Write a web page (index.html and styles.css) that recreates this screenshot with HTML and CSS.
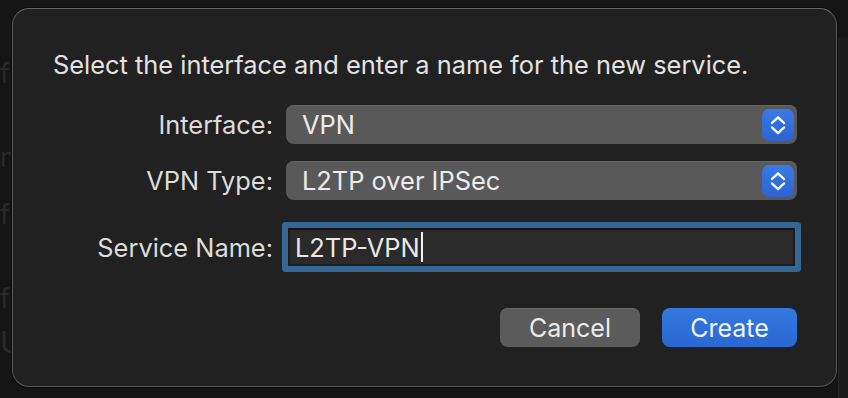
FILE: index.html
```html
<!DOCTYPE html>
<html>
<head>
<meta charset="utf-8">
<link rel="stylesheet" href="styles.css">
</head>
<body>
<div class="backdrop">
  <div class="bg-col">
    <div class="bg-line l1">fi</div>
    <div class="bg-line l2">n</div>
    <div class="bg-line l4">fi</div>
    <div class="bg-line l6">fi</div>
    <div class="bg-line l7">US</div>
  </div>
  <div class="bg-right"></div>
</div>
<div class="sheet">
  <p class="heading">Select the interface and enter a name for the new service.</p>
  <div class="form">
    <label class="label">Interface:</label>
    <div class="popup">
      <span class="popup-text">VPN</span>
      <span class="stepper">
        <svg width="32" height="32" viewBox="0 0 32 32"><path d="M10 14 L16 8.3 L22 14 M10 18.5 L16 24.2 L22 18.5" fill="none" stroke="#fff" stroke-width="2.4" stroke-linecap="round" stroke-linejoin="round"/></svg>
      </span>
    </div>
    <label class="label">VPN Type:</label>
    <div class="popup">
      <span class="popup-text">L2TP over IPSec</span>
      <span class="stepper">
        <svg width="32" height="32" viewBox="0 0 32 32"><path d="M10 14 L16 8.3 L22 14 M10 18.5 L16 24.2 L22 18.5" fill="none" stroke="#fff" stroke-width="2.4" stroke-linecap="round" stroke-linejoin="round"/></svg>
      </span>
    </div>
    <label class="label label-field">Service Name:</label>
    <div class="field"><span class="field-text">L2TP-VPN</span><span class="caret"></span></div>
  </div>
  <div class="buttons">
    <button class="btn btn-cancel">Cancel</button>
    <button class="btn btn-create">Create</button>
  </div>
</div>
</body>
</html>
```
FILE: styles.css
```css
* { box-sizing: border-box; }
html, body {
  margin: 0;
  padding: 0;
  width: 848px;
  height: 398px;
  overflow: hidden;
  background: #151515;
  font-family: Inter, "Liberation Sans", sans-serif;
}
.backdrop {
  display: flex;
  justify-content: space-between;
  height: 398px;
}
.bg-col {
  display: flex;
  flex-direction: column;
  color: #2a2a2a;
  font-size: 26px;
  padding-top: 60px;
}
.bg-line { line-height: 28px; height: 28px; }
.l2 { margin-top: 56px; }
.l4 { margin-top: 29px; }
.l6 { margin-top: 56px; }
.l7 { margin-top: 12px; font-size: 30px; line-height: 34px; }
.bg-right {
  width: 10px;
  margin-top: 38px;
  background: #1c1c1c;
  border-left: 1px solid #262626;
}
.sheet {
  position: absolute;
  left: 12px;
  top: 8px;
  width: 825px;
  height: 379px;
  background: #212121;
  border: 1px solid #585858;
  border-top-color: #666666;
  border-radius: 17px;
  box-shadow: 0 0 0 1px #0c0c0c;
  padding: 37px 39px 0 40px;
  color: #dfdfdf;
}
.heading {
  margin: 0;
  font-size: 25.4px;
  line-height: 38px;
  color: #e2e2e2;
}
.form {
  display: grid;
  grid-template-columns: 220px 1fr;
  column-gap: 13px;
  row-gap: 17px;
  margin-top: 21px;
  align-items: center;
}
.label {
  text-align: right;
  font-size: 25.4px;
  color: #dcdcdc;
}
.popup {
  height: 39px;
  background: #595959;
  border-radius: 8px;
  box-shadow: inset 0 1px 0 #666666;
  display: flex;
  align-items: center;
  justify-content: space-between;
  padding-left: 16px;
  padding-right: 3px;
}
.popup-text {
  font-size: 25.4px;
  color: #ececec;
}
.stepper {
  width: 32px;
  height: 32px;
  border-radius: 7px;
  background: linear-gradient(#3a7ae6, #2b63cf);
  display: flex;
}
.label-field { margin-top: 11px; }
.field {
  margin-top: 11px;
  margin-left: 2px;
  margin-right: 2px;
  height: 38px;
  background: #2a2a2a;
  border: 2px solid #1c1c1c;
  border-top-color: #151515;
  box-shadow: 0 0 0 6px #356796;
  border-radius: 1px;
  display: flex;
  align-items: center;
  padding-left: 5px;
}
.field-text {
  font-size: 25.4px;
  color: #e8e8e8;
}
.caret {
  width: 2px;
  height: 30px;
  background: #f2f2f2;
  margin-left: 1px;
}
.buttons {
  display: flex;
  justify-content: flex-end;
  gap: 22px;
  margin-top: 42px;
}
.btn {
  height: 39px;
  border: none;
  border-radius: 8px;
  font-family: Inter, "Liberation Sans", sans-serif;
  font-size: 25px;
  color: #ebebeb;
  padding: 0;
}
.btn-cancel {
  width: 140px;
  background: #5b5b5b;
  box-shadow: inset 0 1px 0 #686868;
}
.btn-create {
  width: 135px;
  background: linear-gradient(#3478e0, #2a67d2);
  color: #f2f4f8;
}
```
